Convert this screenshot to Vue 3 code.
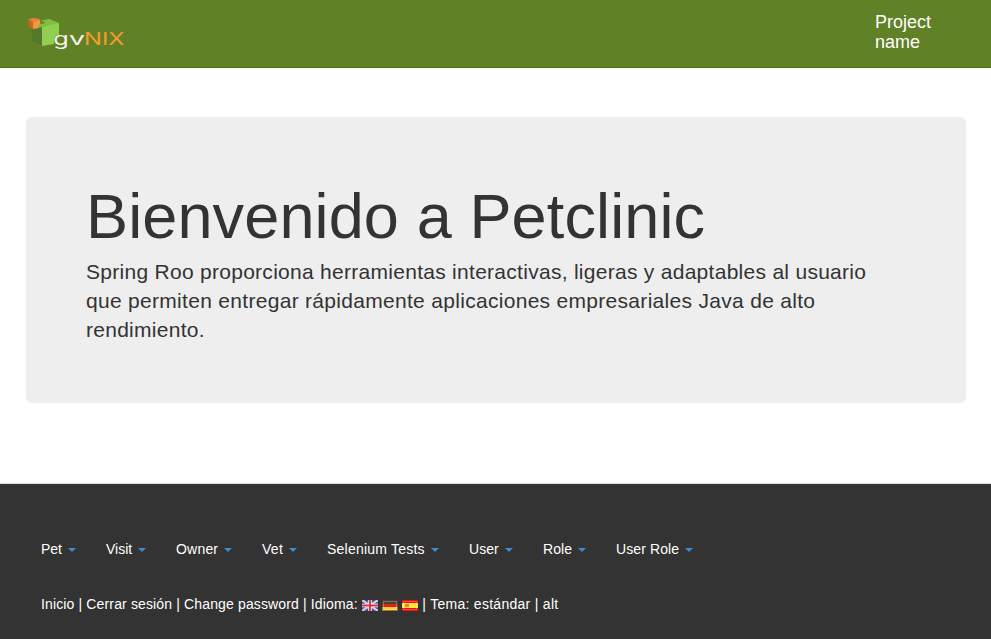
<script setup>
const menus = [
  { label: 'Pet', width: 65, spacing: 0 },
  { label: 'Visit', width: 70, spacing: 0 },
  { label: 'Owner', width: 86, spacing: 0.2 },
  { label: 'Vet', width: 65, spacing: 0.3 },
  { label: 'Selenium Tests', width: 142, spacing: 0.22 },
  { label: 'User', width: 74, spacing: 0.05 },
  { label: 'Role', width: 73, spacing: 0.05 },
  { label: 'User Role', width: 80, spacing: 0.1 },
]
</script>

<template>
  <div class="page">
    <header class="navbar">
      <svg class="logo" width="100" height="36" viewBox="0 0 100 36" aria-label="gvNIX">
        <path d="M4 14 11 12 14 11V31L4 26Z" fill="#55792c" />
        <path d="M12 6 21 4 31 8 30 10 14 12 6 14 10 12V8L15 9 17 7Z" fill="#82bd43" />
        <path d="M14 12 31 8V20Q25 20 26 29L14 31Z" fill="#91cf50" />
        <path d="M0 4 6 3 12 4 11 7 5 8Z" fill="#e98337" />
        <path d="M0 4 5 7V14L1 12Z" fill="#c9661f" />
        <path d="M5 7 12 5V9L10 10V13L5 14Z" fill="#f6963f" />
        <text class="mark light" x="25.3" y="30" textLength="15.5" lengthAdjust="spacingAndGlyphs">g</text>
        <text class="mark light" x="41" y="30" textLength="16" lengthAdjust="spacingAndGlyphs">v</text>
        <text class="mark orange" x="56" y="30" textLength="40.5" lengthAdjust="spacingAndGlyphs">NIX</text>
      </svg>
      <div class="project">Project name</div>
    </header>

    <main>
      <section class="jumbotron">
        <h1>Bienvenido a Petclinic</h1>
        <p>
          <span class="l1">Spring Roo proporciona herramientas interactivas, ligeras y adaptables al usuario</span><br />
          <span class="l2">que permiten entregar rápidamente aplicaciones empresariales Java de alto</span><br />
          <span class="l3">rendimiento.</span>
        </p>
      </section>
    </main>

    <footer>
      <nav>
        <a v-for="m in menus" :key="m.label" :style="{ width: m.width + 'px', letterSpacing: m.spacing + 'px' }">{{ m.label }}<i class="caret"></i></a>
      </nav>
      <div class="links">
        <span class="account">Inicio | Cerrar sesión | Change password | Idioma:</span>
        <span class="flags">
          <svg width="16" height="11" viewBox="0 0 16 11">
            <path fill="#2f57a5" d="M0 0h16v11H0z" />
            <path d="M0 0 16 11M16 0 0 11" stroke="#f2f2f7" stroke-width="2" />
            <path d="M0 0 16 11M16 0 0 11" stroke="#e08090" stroke-width=".7" />
            <path d="M8 0V11M0 5.5H16" stroke="#fff" stroke-width="3.4" />
            <path d="M8 0V11M0 5.5H16" stroke="#d92a3e" stroke-width="1.8" />
          </svg>
          <svg width="16" height="11" viewBox="0 0 16 11">
            <path fill="#483f39" d="M0 0h16v4H0z" />
            <path fill="#e1201a" d="M0 4h16v3H0z" />
            <path fill="#f5cf38" d="M0 7h16v4H0z" />
            <path fill="none" stroke="#55431f" stroke-opacity=".6" d="M.5.5h15v10H.5z" />
            <path fill="none" stroke="#fff" stroke-opacity=".25" d="M1.5 1.5h13v8h-13z" />
          </svg>
          <svg width="16" height="11" viewBox="0 0 16 11">
            <path fill="#f00f0f" d="M0 0h16v11H0z" />
            <path fill="#ffe536" d="M0 3h16v5H0z" />
            <path fill="#c98a54" d="M3 4h1v3H3zM6 4h1v3H6z" />
            <path fill="#e08a4a" d="M4 4h2v3H4z" />
            <path fill="none" stroke="#fff" stroke-opacity=".25" d="M1.5 1.5h13v8h-13z" />
          </svg>
        </span>
        <span class="theme">| Tema: estándar | alt</span>
      </div>
    </footer>
  </div>
</template>

<style>
body { margin: 0; background: #fff; }
</style>
<style scoped>
.page {
  height: 639px;
  display: flex;
  flex-direction: column;
  overflow: hidden;
  font: 14px/20px "Liberation Sans", Arial, sans-serif;
  color: #333;
}
.navbar {
  box-sizing: border-box;
  height: 68px;
  display: flex;
  justify-content: space-between;
  align-items: flex-start;
  padding: 12px 26px 0 28px;
  background: #608125;
  border-bottom: 1px solid #4f7410;
}
.logo { display: block; margin-top: 3px; overflow: visible; }
.mark { font-family: Inter, sans-serif; font-size: 17px; }
.light { fill: #f0f3e9; }
.orange { fill: #f59a2d; }
.project { width: 90px; font-size: 18px; line-height: 20px; color: #fff; }
main { flex: 1; padding: 49px 25px 0 26px; }
.jumbotron {
  box-sizing: border-box;
  height: 286px;
  padding: 68px 60px 0;
  background: #eee;
  border-radius: 6px;
}
h1 { margin: 0; font-size: 63px; line-height: 63px; font-weight: 400; letter-spacing: 0.13px; white-space: nowrap; }
p { margin: 9px 0 0; font-size: 21px; line-height: 29px; white-space: nowrap; }
.l1 { letter-spacing: 0.28px; }
.l2 { letter-spacing: 0.3px; }
.l3 { letter-spacing: 0.27px; }
footer {
  box-sizing: border-box;
  height: 156px;
  padding: 55px 41px 0;
  background: #333;
  border-top: 1px solid #ddd;
  color: #fff;
}
nav { display: flex; }
nav a { display: flex; align-items: center; white-space: nowrap; }
.caret {
  margin: 2px 0 0 6px;
  border: 4px solid transparent;
  border-top-color: #428bca;
  border-bottom: 0;
}
.links { display: flex; margin-top: 35px; white-space: nowrap; }
.account { letter-spacing: 0.14px; }
.flags { display: flex; gap: 4px; padding: 6px 0 0 4px; }
.flags svg { display: block; }
.theme { margin-left: 4.6px; letter-spacing: 0.28px; }
</style>
